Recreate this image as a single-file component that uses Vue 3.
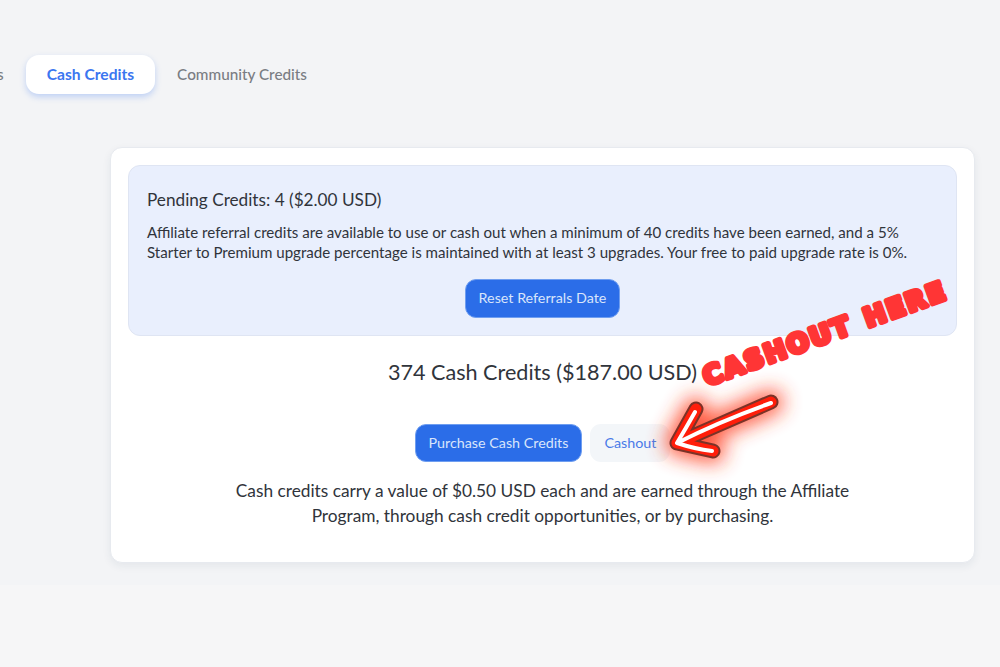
<script setup>
const tabs = [
  { label: 'Referral Credits', active: false },
  { label: 'Cash Credits', active: true },
  { label: 'Community Credits', active: false }
]
const shaft = 'M771 402 L677 443 L713 451 M677 443 L696 409'
const core = 'M771 403 Q720 421 677 443 Q695 449 712 451 M677 443 Q686 428 695 412'
</script>

<template>
  <div class="page">
    <nav class="tabs">
      <a v-for="t in tabs" :key="t.label" class="tab" :class="{ active: t.active }">{{ t.label }}</a>
    </nav>
    <section class="card">
      <div class="panel">
        <h3 class="pending">Pending Credits: 4 ($2.00 USD)</h3>
        <p class="note">Affiliate referral credits are available to use or cash out when a minimum of 40 credits have been earned, and a 5% Starter to Premium upgrade percentage is maintained with at least 3 upgrades. Your free to paid upgrade rate is 0%.</p>
        <div class="center">
          <button class="btn primary">Reset Referrals Date</button>
        </div>
      </div>
      <h2 class="balance">374 Cash Credits ($187.00 USD)</h2>
      <div class="actions">
        <button class="btn primary">Purchase Cash Credits</button>
        <button class="btn light">Cashout</button>
      </div>
      <p class="desc">Cash credits carry a value of $0.50 USD each and are earned through the Affiliate Program, through cash credit opportunities, or by purchasing.</p>
    </section>

    <svg class="overlay" width="1000" height="667" viewBox="0 0 1000 667" fill="none" stroke-linecap="round" stroke-linejoin="round">
      <defs>
        <filter id="glow" x="-60%" y="-100%" width="220%" height="300%">
          <feGaussianBlur stdDeviation="10" />
        </filter>
      </defs>
      <text class="callout" transform="translate(707 386) rotate(-20)">CASHOUT HERE</text>
      <path :d="shaft" stroke="#ff3a1a" stroke-width="24" opacity="0.85" filter="url(#glow)" />
      <path :d="shaft" stroke="#7a3328" stroke-width="15" />
      <path :d="shaft" stroke="#ff1e0a" stroke-width="11" />
      <path :d="core" stroke="#ffffff" stroke-width="4" />
    </svg>
  </div>
</template>

<style>
html, body { background: #f6f6f7; }
</style>

<style scoped>
.page {
  position: relative;
  height: 585px;
  padding-top: 55px;
  box-sizing: border-box;
  background: #f3f4f6;
  font-family: Lato, "Liberation Sans", sans-serif;
  color: #374151;
  overflow: hidden;
}
.tabs {
  display: flex;
  justify-content: flex-end;
  gap: 1px;
  width: 328px;
}
.tab {
  flex: none;
  height: 39px;
  line-height: 38px;
  padding: 0 21px;
  border-radius: 13px;
  font-size: 15.3px;
  font-weight: 500;
  color: #7a7d83;
  white-space: nowrap;
}
.tab.active {
  background: #fff;
  color: #3b76f0;
  font-size: 15.6px;
  font-weight: 700;
  box-shadow: 0 3px 6px rgba(59, 118, 240, 0.28);
}
.card {
  box-sizing: border-box;
  width: 865px;
  height: 416px;
  margin: 53px 0 0 110px;
  padding: 17px;
  background: #fff;
  border: 1px solid #e7eaef;
  border-radius: 12px;
  box-shadow: 0 3px 8px rgba(30, 50, 90, 0.07);
}
.panel {
  box-sizing: border-box;
  height: 171px;
  padding: 22px 18px 0;
  background: #e9effd;
  border: 1px solid #dfe5f3;
  border-radius: 12px;
}
.pending {
  margin: 0;
  font-size: 17.2px;
  line-height: 24px;
  font-weight: 400;
  color: #30343b;
}
.note {
  margin: 10px 0 17px;
  font-size: 15.1px;
  line-height: 20px;
  color: #30343b;
}
.center { display: flex; justify-content: center; }
.btn {
  height: 39px;
  padding: 0 13px 2px;
  border-radius: 11px;
  border: 1px solid transparent;
  font-family: inherit;
  font-size: 14.3px;
  white-space: nowrap;
}
.primary {
  background: #2b6de8;
  border-color: #6f9ef0;
  color: #d9e5fb;
}
.light {
  background: #f3f6f9;
  color: #4a7be8;
}
.balance {
  margin: 22px 0 0;
  text-align: center;
  font-size: 21.6px;
  line-height: 28px;
  font-weight: 400;
  color: #30343b;
}
.actions {
  display: flex;
  justify-content: center;
  gap: 8px;
  margin-top: 38px;
}
.actions .btn {
  height: 38px;
  padding-bottom: 1px;
}
.desc {
  width: 640px;
  margin: 16px auto 0;
  text-align: center;
  font-size: 17.3px;
  line-height: 25px;
  color: #30343b;
}
.overlay {
  position: absolute;
  left: 0;
  top: 0;
  pointer-events: none;
}
.callout {
  font-family: "DejaVu Sans", sans-serif;
  font-size: 26px;
  font-weight: 700;
  letter-spacing: 2.3px;
  word-spacing: 3px;
  fill: #ff3535;
  stroke: #ff3535;
  stroke-width: 5px;
}
</style>
